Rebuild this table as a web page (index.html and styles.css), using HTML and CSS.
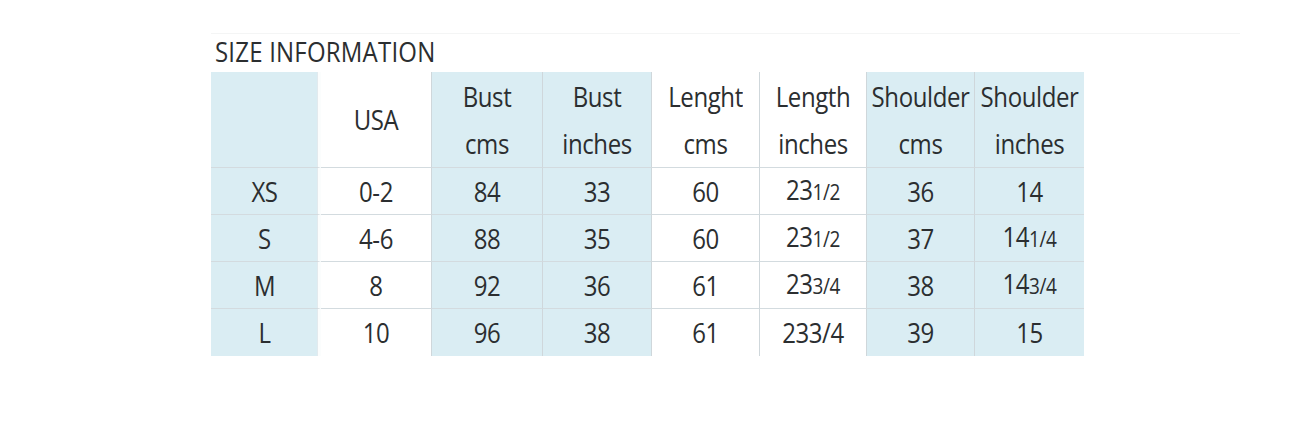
FILE: index.html
```html
<!DOCTYPE html>
<html>
<head>
<meta charset="utf-8">
<link rel="stylesheet" href="styles.css">
</head>
<body>
<div class="page">
  <div class="title-row"><span class="title">SIZE INFORMATION</span></div>
  <div class="table">
    <div class="cell head blue first"></div>
    <div class="cell head white"><span>USA</span></div>
    <div class="cell head blue"><span>Bust</span><span>cms</span></div>
    <div class="cell head blue"><span>Bust</span><span>inches</span></div>
    <div class="cell head white"><span>Lenght</span><span>cms</span></div>
    <div class="cell head white"><span>Length</span><span>inches</span></div>
    <div class="cell head blue"><span>Shoulder</span><span>cms</span></div>
    <div class="cell head blue last"><span>Shoulder</span><span>inches</span></div>

    <div class="cell blue first"><span>XS</span></div>
    <div class="cell white"><span>0-2</span></div>
    <div class="cell blue"><span>84</span></div>
    <div class="cell blue"><span>33</span></div>
    <div class="cell white"><span>60</span></div>
    <div class="cell white"><span>23<small>1/2</small></span></div>
    <div class="cell blue"><span>36</span></div>
    <div class="cell blue last"><span>14</span></div>

    <div class="cell blue first"><span>S</span></div>
    <div class="cell white"><span>4-6</span></div>
    <div class="cell blue"><span>88</span></div>
    <div class="cell blue"><span>35</span></div>
    <div class="cell white"><span>60</span></div>
    <div class="cell white"><span>23<small>1/2</small></span></div>
    <div class="cell blue"><span>37</span></div>
    <div class="cell blue last"><span>14<small>1/4</small></span></div>

    <div class="cell blue first"><span>M</span></div>
    <div class="cell white"><span>8</span></div>
    <div class="cell blue"><span>92</span></div>
    <div class="cell blue"><span>36</span></div>
    <div class="cell white"><span>61</span></div>
    <div class="cell white"><span>23<small>3/4</small></span></div>
    <div class="cell blue"><span>38</span></div>
    <div class="cell blue last"><span>14<small>3/4</small></span></div>

    <div class="cell blue first bottom"><span>L</span></div>
    <div class="cell white bottom"><span>10</span></div>
    <div class="cell blue bottom"><span>96</span></div>
    <div class="cell blue bottom"><span>38</span></div>
    <div class="cell white bottom"><span>61</span></div>
    <div class="cell white bottom"><span>233/4</span></div>
    <div class="cell blue bottom"><span>39</span></div>
    <div class="cell blue last bottom"><span>15</span></div>
  </div>
</div>
</body>
</html>
```

FILE: styles.css
```css
html, body {
  margin: 0;
  padding: 0;
  background: #ffffff;
}

body {
  font-family: "Open Sans", "Noto Sans", sans-serif;
  color: #2b2e30;
}

.page {
  padding: 33px 0 0 211px;
}

.title-row {
  width: 1029px;
  height: 38px;
  border-top: 1px solid #f4f5f5;
  display: flex;
  align-items: flex-end;
}

.title {
  font-size: 24px;
  line-height: 38px;
  padding-left: 4px;
  letter-spacing: 0.2px;
  color: #2b2e30;
  display: inline-block;
  transform: scaleY(1.12);
  transform-origin: 50% 70%;
}

.table {
  display: grid;
  grid-template-columns: 110px 111px 111px 109px 108px 107px 108px 109px;
  grid-template-rows: 96px 47px 47px 47px 47px;
  width: 873px;
}

.cell {
  display: flex;
  flex-direction: column;
  align-items: center;
  justify-content: center;
  font-size: 24px;
  line-height: 47px;
  letter-spacing: -0.4px;
  border-right: 1px solid #cfd7db;
  border-bottom: 1px solid #d3dbdf;
  box-sizing: border-box;
}

.cell span {
  display: block;
  transform: scaleY(1.12);
  white-space: nowrap;
}

.cell small {
  font-size: 19px;
}

.blue {
  background: #daedf3;
}

.white {
  background: #ffffff;
}

.first {
  border-right: 3px solid #fbfdfd;
  box-shadow: inset -1px 0 0 #e2eaee;
}

.last {
  border-right: none;
}

.bottom {
  border-bottom: none;
}
```
